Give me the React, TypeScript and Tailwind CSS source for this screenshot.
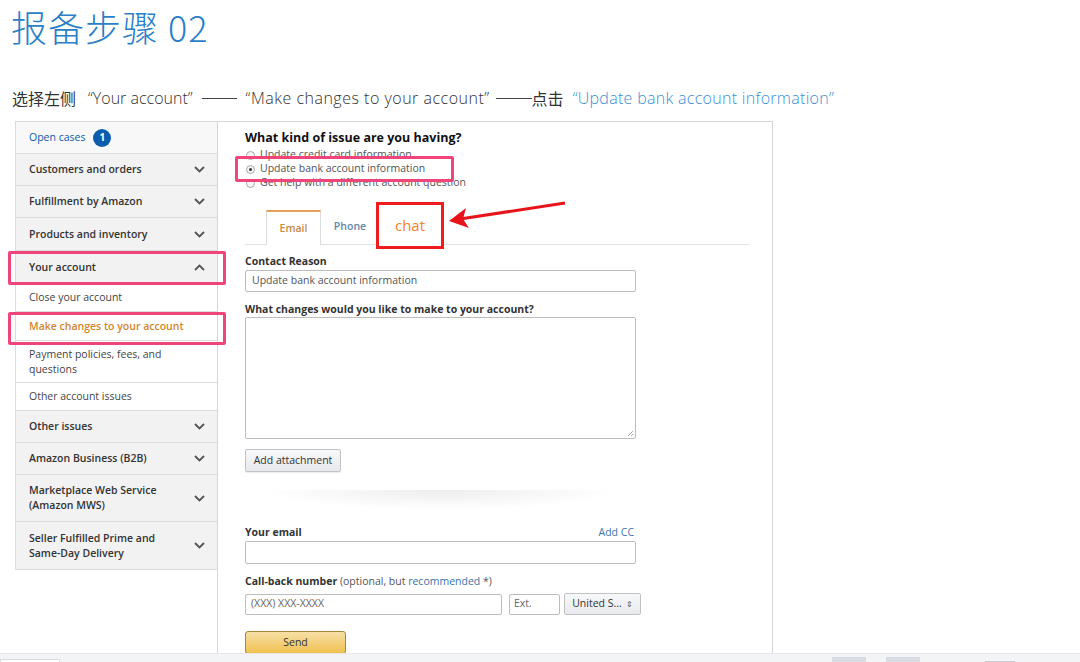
import React from "react";

const Chevron = ({ up = false }: { up?: boolean }) => (
  <svg width="11" height="7" viewBox="0 0 11 7" className="shrink-0">
    <path
      d={up ? "M1 6 L5.5 1.5 L10 6" : "M1 1 L5.5 5.5 L10 1"}
      fill="none"
      stroke="#555"
      strokeWidth="1.8"
    />
  </svg>
);

type Row = { label: string[]; h: string; kind: "gray" | "white" | "open" | "orange"; up?: boolean };

const rows: Row[] = [
  { label: ["Customers and orders"], h: "h-[32px]", kind: "gray" },
  { label: ["Fulfillment by Amazon"], h: "h-[32px]", kind: "gray" },
  { label: ["Products and inventory"], h: "h-[33px]", kind: "gray" },
  { label: ["Your account"], h: "h-[33px]", kind: "gray", up: true },
  { label: ["Close your account"], h: "h-[28px]", kind: "white" },
  { label: ["Make changes to your account"], h: "h-[29px]", kind: "orange" },
  { label: ["Payment policies, fees, and", "questions"], h: "h-[42px]", kind: "white" },
  { label: ["Other account issues"], h: "h-[28px]", kind: "white" },
  { label: ["Other issues"], h: "h-[32px]", kind: "gray" },
  { label: ["Amazon Business (B2B)"], h: "h-[32px]", kind: "gray" },
  { label: ["Marketplace Web Service", "(Amazon MWS)"], h: "h-[47px]", kind: "gray" },
  { label: ["Seller Fulfilled Prime and", "Same-Day Delivery"], h: "h-[48px]", kind: "gray" },
];

function Sidebar() {
  return (
    <div className="w-[202px] self-start border-l border-t border-[#dcdcdc] text-[10.5px]">
      <div className="h-[32px] flex items-center gap-[8px] pl-[13px] bg-[#f8f8f8] border-b border-[#dcdcdc]">
        <span className="text-[#0a5bab]">Open cases</span>
        <span className="w-[18px] h-[18px] rounded-full bg-[#0b5cad] text-white text-[10px] font-bold flex items-center justify-center">
          1
        </span>
      </div>
      {rows.map((r, i) => (
        <div
          key={i}
          className={`${r.h} flex items-center justify-between pl-[13px] pr-[12px] border-b border-[#dcdcdc] ${
            r.kind === "gray" ? "bg-[#f2f2f2] font-semibold text-[#333]" : "bg-white text-[#444]"
          } ${r.kind === "orange" ? "text-[#d2862e] font-semibold" : ""}`}
        >
          <div className="leading-[15px]">
            {r.label.map((l, j) => (
              <div key={j}>{l}</div>
            ))}
          </div>
          {r.kind === "gray" && <Chevron up={r.up} />}
        </div>
      ))}
    </div>
  );
}

const Radio = ({ on = false }: { on?: boolean }) => (
  <span className="w-[9px] h-[9px] rounded-full border border-[#aaa] bg-[#f4f4f4] flex items-center justify-center">
    {on && <span className="w-[3px] h-[3px] rounded-full bg-[#333]" />}
  </span>
);

function Form() {
  return (
    <div className="w-[556px] h-[541px] border-l border-t border-r border-[#d6d6d6] pl-[27px] pt-[8px] text-[10.5px] text-[#222]">
      <div className="h-[16px] leading-[16px] text-[12.5px] font-bold text-[#111]">What kind of issue are you having?</div>
      <div className="mt-[2px] text-[10.5px] text-[#555]">
        {[
          ["Update credit card information", false],
          ["Update bank account information", true],
          ["Get help with a different account question", false],
        ].map(([t, on], i) => (
          <div key={i} className="h-[14px] flex items-center gap-[5px] pl-[1px]">
            <Radio on={on as boolean} />
            <span>{t as string}</span>
          </div>
        ))}
      </div>
      <div className="mt-[20px] w-[504px] h-[35px] border-b border-[#e2e2e2] flex pl-[21px]">
        <div className="w-[55px] h-[35px] -mb-px bg-white border-t-2 border-t-[#e4a15a] border-x border-x-[#dcdcdc] flex items-center justify-center text-[#c98a44] font-semibold">
          Email
        </div>
        <div className="w-[58px] h-[34px] flex items-center justify-center text-[#5f86ab] font-semibold">Phone</div>
      </div>
      <div className="mt-[8px] h-[16px] leading-[16px] font-bold text-[#333]">Contact Reason</div>
      <div className="mt-[1px] w-[391px] h-[22px] border border-[#bdbdbd] rounded-[2px] flex items-center pl-[6px] text-[#555]">
        Update bank account information
      </div>
      <div className="mt-[9px] h-[16px] leading-[16px] font-bold text-[#333]">What changes would you like to make to your account?</div>
      <div className="relative w-[391px] h-[122px] border border-[#bdbdbd] rounded-[2px]">
        <svg className="absolute right-[1px] bottom-[1px]" width="7" height="7" viewBox="0 0 7 7">
          <path d="M6 1 L1 6 M6 4 L4 6" stroke="#aaa" strokeWidth="1" />
        </svg>
      </div>
      <div className="mt-[10px] w-[96px] h-[23px] border border-[#c2c2c2] rounded-[2px] bg-gradient-to-b from-[#f7f8fa] to-[#e7e9ec] flex items-center justify-center text-[#333] shadow-[0_1px_0_rgba(0,0,0,0.08)]">
        Add attachment
      </div>
      <div className="mt-[18px] ml-[16px] w-[360px] h-[20px] bg-[radial-gradient(ellipse_at_top,rgba(0,0,0,0.07),rgba(0,0,0,0)_70%)]" />
      <div className="mt-[14px] w-[391px] h-[16px] leading-[16px] flex justify-between">
        <span className="font-bold text-[#333]">Your email</span>
        <span className="text-[#3b73a6] pr-[2px]">Add CC</span>
      </div>
      <div className="mt-[1px] w-[391px] h-[23px] border border-[#bdbdbd] rounded-[2px]" />
      <div className="mt-[9px] h-[16px] leading-[16px] text-[#555]">
        <span className="font-bold text-[#333]">Call-back number</span> (optional, but{" "}
        <span className="text-[#3b73a6]">recommended</span> *)
      </div>
      <div className="mt-[4px] flex gap-[7px] items-center">
        <div className="w-[257px] h-[21px] border border-[#bdbdbd] rounded-[2px] flex items-center pl-[5px] text-[#666]">
          (XXX) XXX-XXXX
        </div>
        <div className="w-[51px] h-[21px] border border-[#bdbdbd] rounded-[2px] flex items-center pl-[4px] text-[#666] -mr-[3px]">
          Ext.
        </div>
        <div className="w-[77px] h-[22px] border border-[#c2c2c2] rounded-[2px] bg-gradient-to-b from-[#f7f8fa] to-[#e7e9ec] flex items-center justify-center gap-[4px] text-[#333]">
          United S...<span className="text-[8px] text-[#555]">⇕</span>
        </div>
      </div>
      <div className="mt-[16px] w-[101px] h-[23px] border border-[#a88734] rounded-[3px] bg-gradient-to-b from-[#f7dfa5] to-[#f0c14b] flex items-center justify-center text-[#333]">
        Send
      </div>
    </div>
  );
}

export default function App() {
  return (
    <div className="relative w-[1080px] h-[662px] bg-white overflow-hidden font-['Open_Sans',sans-serif]">
      <h1 className="pl-[11px] leading-[52px] text-[36px] font-light text-[#2b7fc8] tracking-[1px] font-['Noto_Sans_CJK_SC',sans-serif] whitespace-nowrap">
        报备步骤 02
      </h1>
      <p className="mt-[34px] pl-[12px] h-[24px] leading-[24px] text-[16px] text-[#333] font-['Open_Sans','Noto_Sans_CJK_SC',sans-serif] font-light whitespace-nowrap flex items-center">
        <span className="font-['Noto_Sans_CJK_SC',sans-serif] font-normal">选择左侧</span>
        <span className="ml-[12px]">“Your account”</span>
        <span className="ml-[9px] w-[35px] h-px bg-[#444]" />
        <span className="ml-[9px] tracking-[0.5px]">“Make changes to your account”</span>
        <span className="ml-[6px] w-[36px] h-px bg-[#444]" />
        <span className="font-['Noto_Sans_CJK_SC',sans-serif] font-normal">点击</span>
        <span className="ml-[9px] text-[#3b8fd6] tracking-[0.3px]">“Update bank account information”</span>
      </p>
      <div className="mt-[11px] flex pl-[15px]">
        <Sidebar />
        <Form />
      </div>

      {/* annotations */}
      <div className="absolute left-[8px] top-[251px] w-[218px] h-[34px] border-[3px] border-[#f0457a] rounded-[2px]" />
      <div className="absolute left-[8px] top-[312px] w-[218px] h-[33px] border-[3px] border-[#f0457a] rounded-[2px]" />
      <div className="absolute left-[235px] top-[156px] w-[219px] h-[26px] border-[3px] border-[#f0457a] rounded-[2px]" />
      <div className="absolute left-[376px] top-[202px] w-[68px] h-[47px] border-[3px] border-[#ee1c1c] bg-white flex items-center justify-center text-[15px] text-[#f5821f] font-['Open_Sans',sans-serif]">
        chat
      </div>
      <svg className="absolute left-[440px] top-[195px]" width="135" height="40" viewBox="0 0 135 40">
        <line x1="125" y1="8" x2="20" y2="24" stroke="#e8141c" strokeWidth="3" />
        <path d="M9 26 L26 13 L23 24 L29 33 Z" fill="#e8141c" />
      </svg>

      {/* bottom strip */}
      <div className="absolute left-0 bottom-0 w-[1080px] h-[9px] bg-[#f3f4f6] border-t border-[#e6e8ec]">
        <div className="absolute left-0 top-[5px] w-[60px] h-[6px] bg-white border border-[#d9dbe0]" />
        <div className="absolute left-[832px] top-[3px] w-[34px] h-[6px] bg-[#d9dde3]" />
        <div className="absolute left-[886px] top-[3px] w-[34px] h-[6px] bg-[#d9dde3]" />
        <div className="absolute left-[985px] top-[7px] w-[30px] h-[3px] bg-[#c8ccd2]" />
      </div>
    </div>
  );
}
